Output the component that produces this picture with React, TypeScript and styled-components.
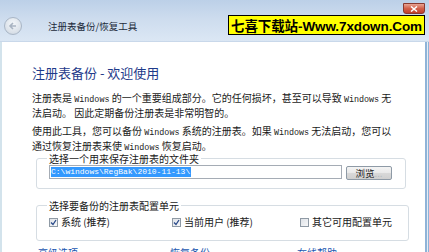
import React from "react";
import styled, { createGlobalStyle } from "styled-components";

const GlobalStyle = createGlobalStyle`
  html, body {
    margin: 0;
    padding: 0;
    overflow: hidden;
    background: #fff;
  }
  body {
    font-family: "Noto Sans CJK SC", "Liberation Sans", sans-serif;
  }
`;

const Window = styled.div`
  position: relative;
  width: 429px;
  height: 252px;
  overflow: hidden;
  background: #fff;
  display: flex;
  flex-direction: column;
`;

const TitleBar = styled.div`
  height: 42px;
  flex: none;
  display: flex;
  align-items: center;
  padding: 10px 0 0 4px;
  box-sizing: border-box;
  background: linear-gradient(#bcd0e8 0%, #cddcee 45%, #dbe7f4 100%);
  border-bottom: 1px solid #c9d8ea;
`;

const BackButton = styled.div`
  width: 18px;
  height: 18px;
  border-radius: 50%;
  box-sizing: border-box;
  border: 1px solid #a9b6c6;
  background: radial-gradient(circle at 50% 35%, #f4f7fa 0%, #d9e0e8 70%, #c3ccd7 100%);
  display: flex;
  align-items: center;
  justify-content: center;
`;

const TitleText = styled.span`
  margin-left: 26px;
  font-size: 9.5px;
  color: #1c2a3a;
`;

const Banner = styled.div`
  position: absolute;
  left: 228px;
  top: 15px;
  width: 197px;
  height: 20px;
  box-sizing: border-box;
  border: 1px solid #000;
  background: #ffff00;
  display: flex;
  align-items: center;
  justify-content: center;
  font-family: "Liberation Sans", "Noto Sans CJK SC", sans-serif;
  font-weight: bold;
  font-size: 13.5px;
  letter-spacing: -0.1px;
  color: #000;
  white-space: nowrap;
`;

const CloseButton = styled.div`
  position: absolute;
  top: 3px;
  right: 4px;
  width: 22px;
  height: 11px;
  border-radius: 0 0 3px 3px;
  border: 1px solid #8a3a30;
  box-sizing: border-box;
  background: linear-gradient(#e8a493 0%, #d2604a 50%, #c1402a 100%);
  display: flex;
  align-items: center;
  justify-content: center;
`;

const Body = styled.div`
  flex: 1;
  display: flex;
  border-left: 2px solid #d3e3ec;
  border-right: 4px solid #8fb3d8;
`;

const Content = styled.div`
  flex: 1;
  padding: 23px 18px 0 30px;
  border-right: 1px solid #e6edf3;
`;

const Heading = styled.h1`
  margin: 0;
  font-size: 13px;
  font-weight: normal;
  line-height: 16px;
  color: #1e3a8a;
`;

const Para = styled.p<{ $top: number }>`
  margin: ${(p) => p.$top}px 0 0;
  font-size: 10px;
  line-height: 11.5px;
  color: #1a1a1a;
  white-space: nowrap;
`;

const Win = styled.span`
  font-family: "Liberation Mono", monospace;
  font-size: 8.4px;
`;

const Group = styled.fieldset<{ $top: number; $h: number }>`
  margin: ${(p) => p.$top}px 0 0 4px;
  width: 370px;
  height: ${(p) => p.$h}px;
  box-sizing: border-box;
  border: 1px solid #d6dde3;
  border-radius: 3px;
  padding: 0 8px 0 12px;
`;

const Legend = styled.legend`
  font-size: 10px;
  line-height: 11px;
  padding: 0 2px;
  margin-left: -2px;
  color: #1a1a1a;
`;

const Row = styled.div`
  display: flex;
  align-items: center;
`;

const PathInput = styled.div`
  width: 293px;
  height: 14px;
  box-sizing: border-box;
  border: 1px solid #a5acb5;
  background: #fff;
  display: flex;
  align-items: center;
  padding-left: 1px;
  margin-top: 0;
`;

const Selected = styled.span`
  background: #3399ff;
  color: #fff;
  font-family: "Liberation Mono", monospace;
  font-size: 8px;
  line-height: 10px;
  padding-right: 1px;
`;

const BrowseButton = styled.div`
  width: 46px;
  height: 14px;
  margin: 2px 0 0 4px;
  box-sizing: border-box;
  border: 1px solid #8e9aa6;
  border-radius: 2px;
  background: linear-gradient(#f4f4f4 0%, #e9e9e9 50%, #d9d9d9 51%, #cfcfcf 100%);
  font-size: 9.5px;
  line-height: 12px;
  text-align: center;
  color: #1a1a1a;
`;

const Dots = styled.span`
  color: #b0b8c0;
`;

const Check = styled.label<{ $w: number }>`
  display: flex;
  align-items: center;
  width: ${(p) => p.$w}px;
  font-size: 10px;
  line-height: 14px;
  color: #1a1a1a;
  margin-top: 4px;
`;

const Box = styled.span`
  width: 9px;
  height: 9px;
  box-sizing: border-box;
  border: 1px solid #8f9aa5;
  background: linear-gradient(135deg, #dfe3e8, #f7f8f9);
  margin-right: 3px;
  display: flex;
  align-items: center;
  justify-content: center;
`;

const Links = styled.div`
  display: flex;
  margin: 5px 0 0 6px;
`;

const Link = styled.span<{ $w: number }>`
  width: ${(p) => p.$w}px;
  font-size: 10px;
  line-height: 14px;
  color: #1a56b0;
`;

const CheckBox = ({ checked }: { checked: boolean }) => (
  <Box>
    {checked && (
      <svg width="7" height="7" viewBox="0 0 7 7">
        <path d="M1 3.5 L3 5.5 L6 1" fill="none" stroke="#2a4a8a" strokeWidth="1.3" />
      </svg>
    )}
  </Box>
);

export default function App() {
  return (
    <>
      <GlobalStyle />
      <Window>
        <TitleBar>
          <BackButton>
            <svg width="10" height="10" viewBox="0 0 10 10">
              <path d="M8 5 H2.5 M5 2 L2 5 L5 8" fill="none" stroke="#a9b4c2" strokeWidth="1.6" />
            </svg>
          </BackButton>
          <TitleText>注册表备份/恢复工具</TitleText>
        </TitleBar>
        <Banner>七喜下载站-Www.7xdown.Com</Banner>
        <CloseButton>
          <svg width="8" height="6" viewBox="0 0 8 6">
            <path d="M1 0.5 L7 5.5 M7 0.5 L1 5.5" stroke="#fff" strokeWidth="1.5" />
          </svg>
        </CloseButton>
        <Body>
          <Content>
            <Heading>注册表备份 - 欢迎使用</Heading>
            <Para $top={11}>
              注册表是 <Win>Windows</Win> 的一个重要组成部分。它的任何损坏，甚至可以导致 <Win>Windows</Win> 无
              <br />
              法启动。 因此定期备份注册表是非常明智的。
            </Para>
            <Para $top={7}>
              使用此工具，您可以备份 <Win>Windows</Win> 系统的注册表。如果 <Win>Windows</Win> 无法启动，您可以
              <br />
              通过恢复注册表来使 <Win>Windows</Win> 恢复启动。
            </Para>
            <Group $top={-1} $h={36}>
              <Legend>选择一个用来保存注册表的文件夹</Legend>
              <Row>
                <PathInput>
                  <Selected>C:\windows\RegBak\2010-11-13\</Selected>
                </PathInput>
                <BrowseButton>
                  浏览<Dots>...</Dots>
                </BrowseButton>
              </Row>
            </Group>
            <Group $top={11} $h={41}>
              <Legend>选择要备份的注册表配置单元</Legend>
              <Row>
                <Check $w={123}>
                  <CheckBox checked />
                  系统 (推荐)
                </Check>
                <Check $w={128}>
                  <CheckBox checked />
                  当前用户 (推荐)
                </Check>
                <Check $w={100}>
                  <CheckBox checked={false} />
                  其它可用配置单元
                </Check>
              </Row>
            </Group>
            <Links>
              <Link $w={132}>高级选项</Link>
              <Link $w={127}>恢复备份</Link>
              <Link $w={80}>在线帮助</Link>
            </Links>
          </Content>
        </Body>
      </Window>
    </>
  );
}
